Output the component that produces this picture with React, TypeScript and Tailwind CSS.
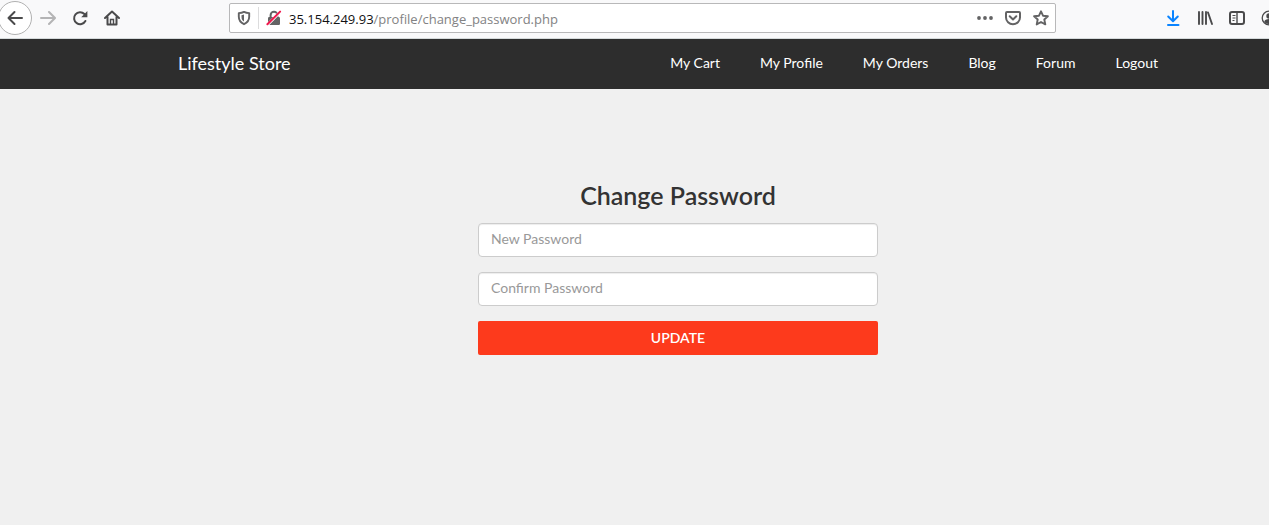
import type { ReactNode } from "react";

type IconButtonProps = {
  label: string;
  className?: string;
  children: ReactNode;
};

function IconButton({ label, className = "w-8", children }: IconButtonProps) {
  return (
    <button
      type="button"
      aria-label={label}
      className={`flex h-8 shrink-0 items-center justify-center ${className}`}
    >
      <svg width="16" height="16" viewBox="0 0 16 16" fill="none" aria-hidden="true">
        {children}
      </svg>
    </button>
  );
}

function BrowserBar() {
  return (
    <header className="flex h-[39px] items-start overflow-hidden border-b border-[#d5dadb] bg-[#f9f9fa] pt-0.5 text-[#4a4a4b]">
      <div className="-ml-0.5 flex w-[231px] shrink-0">
        <button
          type="button"
          aria-label="Back"
          className="flex size-[34px] -mt-px shrink-0 items-center justify-center rounded-full border border-[#b1b1b1] bg-white"
        >
          <svg width="16" height="16" viewBox="0 0 16 16" fill="none" aria-hidden="true">
            <path
              d="M15 8H1.5M7.5 2 1.5 8l6 6"
              stroke="currentColor"
              strokeWidth="2"
              strokeLinecap="round"
              strokeLinejoin="round"
            />
          </svg>
        </button>
        <IconButton label="Forward" className="w-8 text-[#b4b4b5]">
          <path
            d="M1 8h13.5M9 2l6 6-6 6"
            stroke="currentColor"
            strokeWidth="2"
            strokeLinecap="round"
            strokeLinejoin="round"
          />
        </IconButton>
        <IconButton label="Reload">
          <path
            d="M13.4 11A6 6 0 1 1 12.4 4"
            stroke="currentColor"
            strokeWidth="2"
            strokeLinecap="round"
          />
          <path d="M15.4 1v6.200H9.200z" fill="currentColor" />
        </IconButton>
        <IconButton label="Home">
          <path
            d="M1 8l7-6.4L15 8M3.5 7v7.5h9V7"
            stroke="currentColor"
            strokeWidth="2"
            strokeLinecap="round"
            strokeLinejoin="round"
          />
          <path d="M6.5 14V9.5h3V14" stroke="currentColor" strokeWidth="1.4" />
        </IconButton>
      </div>

      <div className="mt-px flex h-[30px] min-w-0 flex-1 items-center rounded-xs border border-[#b8b8b9] bg-white text-[#636364]">
        <IconButton label="Tracking protection" className="w-7">
          <path
            d="M8 1.9c1.7.8 3.4 1.1 5.2 1.2v3.7c0 3.500-1.700 5.800-5.200 7.400-3.500-1.600-5.200-3.900-5.200-7.400V3.100C4.600 3 6.300 2.700 8 1.900z"
            stroke="currentColor"
            strokeWidth="1.9"
            strokeLinejoin="round"
          />
          <path d="M8 4.600v6.800C6.300 10.300 5.500 9 5.500 6.900V5.200z" fill="currentColor" />
        </IconButton>
        <span className="h-[22px] w-px shrink-0 bg-[#dcdcdd]" />
        <IconButton label="Connection is not secure" className="w-[30px]">
          <rect x="2" y="7" width="12" height="8" rx="1.200" fill="currentColor" />
          <path d="M4.600 7.500V5.200a3.400 3.400 0 0 1 6.800 0v2.300" stroke="currentColor" strokeWidth="2" />
          <path d="M.8 13.400 13.400.8l2 2L2.800 15.400z" fill="#fff" />
          <path d="M1.400 14.300 14.100 1.600" stroke="#f0184c" strokeWidth="2" strokeLinecap="round" />
        </IconButton>
        <div
          role="textbox"
          aria-label="Address"
          className="min-w-0 flex-1 truncate pt-0.5 font-['Open_Sans',sans-serif] text-[13px] leading-5 text-[#828283]"
        >
          <span className="text-[#111113]">35.154.249.93</span>/profile/change_password.php
        </div>
        <IconButton label="Page actions" className="w-7">
          <circle cx="2" cy="8" r="1.900" fill="currentColor" />
          <circle cx="8" cy="8" r="1.900" fill="currentColor" />
          <circle cx="14" cy="8" r="1.900" fill="currentColor" />
        </IconButton>
        <IconButton label="Save to Pocket" className="w-7">
          <path
            d="M2 2h12q1 0 1 1v4.500a7 6.700 0 0 1-14 0V3q0-1 1-1z"
            stroke="currentColor"
            strokeWidth="2"
          />
          <path
            d="m4.700 6.300 3.300 3.100 3.300-3.100"
            stroke="currentColor"
            strokeWidth="2"
            strokeLinecap="round"
            strokeLinejoin="round"
          />
        </IconButton>
        <IconButton label="Bookmark this page" className="w-7">
          <path
            d="m8 1.300 2 4.400 4.900.5-3.600 3.300 1 4.900L8 12l-4.300 2.400 1-4.900L1.100 6.200 6 5.700z"
            stroke="currentColor"
            strokeWidth="1.900"
            strokeLinejoin="round"
          />
        </IconButton>
      </div>

      <div className="flex w-[213px] shrink-0 pl-[101px]">
        <IconButton label="Downloads" className="w-8 text-[#0a84ff]">
          <path
            d="M8 1v10M3.200 6.500 8 11.300l4.800-4.800M3 15h10.500"
            stroke="currentColor"
            strokeWidth="2"
            strokeLinecap="round"
            strokeLinejoin="round"
          />
        </IconButton>
        <IconButton label="Library">
          <path
            d="M2 2v12M5.500 2v12M9 2v12M11 2.500l4 11.500"
            stroke="currentColor"
            strokeWidth="1.900"
            strokeLinecap="round"
          />
        </IconButton>
        <IconButton label="Sidebars">
          <rect x="1" y="2" width="14" height="12" rx="2" stroke="currentColor" strokeWidth="2" />
          <path d="M8 2v12" stroke="currentColor" strokeWidth="1.400" />
          <path d="M3.500 5.500h3M3.500 8h3M3.500 10.500h2" stroke="currentColor" strokeWidth="1" />
        </IconButton>
        <IconButton label="Account">
          <circle cx="8" cy="8" r="6.800" stroke="currentColor" strokeWidth="1.300" />
          <circle cx="8" cy="6" r="2.700" fill="currentColor" />
          <path d="M3.200 12c.5-2.300 2.200-3 4.800-3s4.300.7 4.800 3A6 6 0 0 1 8 14a6 6 0 0 1-4.800-2z" fill="currentColor" />
        </IconButton>
      </div>
    </header>
  );
}

const links = ["My Cart", "My Profile", "My Orders", "Blog", "Forum", "Logout"];

function SiteNav() {
  return (
    <nav className="bg-[#2d2d2d] pl-[87px] text-white">
      <div className="mx-auto flex h-[50px] max-w-[1000px] items-center justify-between pb-0.5">
        <a href="#" className="text-lg leading-5">
          Lifestyle Store
        </a>
        <ul className="flex text-sm leading-5">
          {links.map((link) => (
            <li key={link}>
              <a href="#" className="block px-5">
                {link}
              </a>
            </li>
          ))}
        </ul>
      </div>
    </nav>
  );
}

function PasswordField({ id, label }: { id: string; label: string }) {
  return (
    <input
      id={id}
      type="password"
      aria-label={label}
      placeholder={label}
      className="h-[34px] w-full rounded-sm border border-[#cccccc] bg-white px-3 pb-1 text-sm shadow-[inset_0_1px_1px_rgba(0,0,0,0.075)] placeholder:text-[#999999]"
    />
  );
}

export default function App() {
  return (
    <div className="flex min-h-screen flex-col bg-[#f0f0f0] font-[Lato,sans-serif]">
      <BrowserBar />
      <SiteNav />
      <main className="pt-[91px] pl-[87px]">
        <form className="mx-auto flex max-w-[400px] flex-col gap-[15px]">
          <h1 className="-mb-0.5 text-center text-[25px] leading-[30px] font-semibold text-[#333333]">
            Change Password
          </h1>
          <PasswordField id="new-password" label="New Password" />
          <PasswordField id="confirm-password" label="Confirm Password" />
          <button
            type="button"
            className="h-[34px] rounded-xs bg-[#fd3a1c] text-sm font-semibold text-white"
          >
            UPDATE
          </button>
        </form>
      </main>
    </div>
  );
}
